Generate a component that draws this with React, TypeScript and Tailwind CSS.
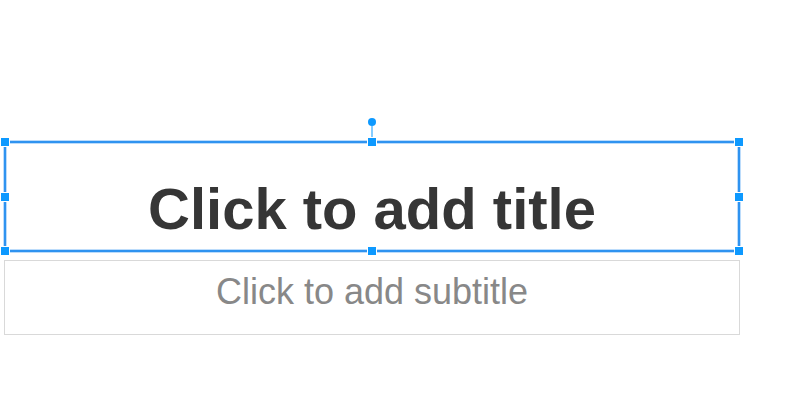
import React from "react";

const handle = "absolute w-[8px] h-[8px] bg-[#0d99ff] ring-1 ring-white -translate-x-1/2 -translate-y-1/2";

export default function App() {
  return (
    <div
      className="w-[787px] h-[404px] bg-white overflow-hidden flex flex-col items-start gap-[8px] pt-[141px] pl-[4px]"
      style={{ fontFamily: '"Liberation Sans", Arial, sans-serif' }}
    >
      {/* Title placeholder (selected) */}
      <div className="relative w-[736px] h-[111px] flex justify-center border-2 border-[#2f93f0] shadow-[0_0_0_1px_#bcdcfb,inset_0_0_0_1px_#bcdcfb]">
        <div className="pt-[37px] text-[58px] leading-none font-bold text-[#363636]">
          Click to add title
        </div>

        {/* rotate handle */}
        <div className="absolute left-1/2 top-[-17px] w-px h-[16px] bg-[#0d99ff] -translate-x-1/2" />
        <div className="absolute left-1/2 top-[-25px] w-[8px] h-[8px] rounded-full bg-[#0d99ff] -translate-x-1/2" />

        {/* resize handles */}
        <div className={`${handle} left-[-1px] top-[-1px]`} />
        <div className={`${handle} left-1/2 top-[-1px]`} />
        <div className={`${handle} left-[calc(100%+1px)] top-[-1px]`} />
        <div className={`${handle} left-[-1px] top-1/2`} />
        <div className={`${handle} left-[calc(100%+1px)] top-1/2`} />
        <div className={`${handle} left-[-1px] top-[calc(100%+1px)]`} />
        <div className={`${handle} left-1/2 top-[calc(100%+1px)]`} />
        <div className={`${handle} left-[calc(100%+1px)] top-[calc(100%+1px)]`} />
      </div>

      {/* Subtitle placeholder */}
      <div className="w-[736px] h-[75px] flex justify-center border border-[#d9d9d9]">
        <div className="pt-[13px] text-[36px] leading-none text-[#888888]">
          Click to add subtitle
        </div>
      </div>
    </div>
  );
}
